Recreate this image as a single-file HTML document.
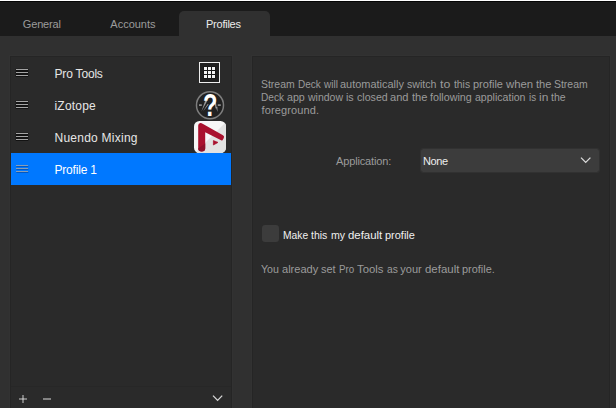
<!DOCTYPE html>
<html>
<head>
<meta charset="utf-8">
<title>Profiles</title>
<style>
html,body{margin:0;padding:0;}
body{width:616px;height:408px;overflow:hidden;background:#303030;position:relative;font-family:"Liberation Sans",sans-serif;font-size:12px;color:#e4e4e4;}
.abs{position:absolute;}
.t{position:absolute;white-space:nowrap;line-height:14px;transform-origin:0 0;}
#topbar{left:0;top:0;width:616px;height:36px;background:#1b1b1b;}
#topw{left:0;top:0;width:616px;height:1px;background:#fff;}
#topb{left:0;top:1px;width:616px;height:1px;background:#050505;}
#tab{left:179px;top:11px;width:91px;height:25px;background:#303030;border-radius:5px 5px 0 0;}
.tabt{top:18px;font-size:11px;line-height:13px;color:#9c9c9c;}
.panel{position:absolute;background:#2a2a2a;border:1px solid #252525;box-shadow:0 0 0 1px #323232;}
#lp{left:10px;top:56px;width:220px;height:360px;}
#rp{left:252px;top:56px;width:356px;height:360px;}
.row{position:absolute;left:11px;width:220px;height:32px;}
.name{left:54.5px;font-size:12px;color:#e6e6e6;}
.g{color:#9b9b9b;font-size:11px;line-height:13px;}
.wd{display:inline-block;transform-origin:0 0;}
.w{color:#f0f0f0;font-size:11px;line-height:13px;}
</style>
</head>
<body>
<div class="abs" id="topbar"></div>
<div class="abs" id="topw"></div>
<div class="abs" id="topb"></div>
<div class="abs" id="tab"></div>
<div class="t tabt" id="t1" style="left:22.8px;letter-spacing:-0.17px;">General</div>
<div class="t tabt" id="t2" style="left:110.3px;">Accounts</div>
<div class="t tabt" id="t3" style="left:206px;color:#ececec;letter-spacing:-0.24px;">Profiles</div>

<div class="panel" id="lp"></div>
<div class="panel" id="rp"></div>

<!-- selected row -->
<div class="row" style="top:153px;background:#0078ff;"></div>

<!-- hamburgers -->
<svg class="abs" style="left:14px;top:66px;" width="16" height="12" viewBox="0 0 16 12">
  <rect x="1.7" y="2.75" width="12.6" height="8.25" fill="#131313"/>
  <rect x="2" y="3" width="12" height="1" fill="#a4a4a4"/>
  <rect x="2" y="6" width="12" height="1" fill="#a4a4a4"/>
  <rect x="2" y="9" width="12" height="1" fill="#a4a4a4"/>
</svg>
<svg class="abs" style="left:14px;top:98px;" width="16" height="12" viewBox="0 0 16 12">
  <rect x="1.7" y="2.75" width="12.6" height="8.25" fill="#131313"/>
  <rect x="2" y="3" width="12" height="1" fill="#a4a4a4"/>
  <rect x="2" y="6" width="12" height="1" fill="#a4a4a4"/>
  <rect x="2" y="9" width="12" height="1" fill="#a4a4a4"/>
</svg>
<svg class="abs" style="left:14px;top:130px;" width="16" height="12" viewBox="0 0 16 12">
  <rect x="1.7" y="2.75" width="12.6" height="8.25" fill="#131313"/>
  <rect x="2" y="3" width="12" height="1" fill="#a4a4a4"/>
  <rect x="2" y="6" width="12" height="1" fill="#a4a4a4"/>
  <rect x="2" y="9" width="12" height="1" fill="#a4a4a4"/>
</svg>
<svg class="abs" style="left:14px;top:162px;" width="16" height="12" viewBox="0 0 16 12">
  <rect x="2.4" y="4" width="12" height="1" fill="#0058c4"/>
  <rect x="2.4" y="7" width="12" height="1" fill="#0058c4"/>
  <rect x="2.4" y="10" width="12" height="1" fill="#0058c4"/>
  <rect x="2" y="3" width="12" height="1" fill="#899db4"/>
  <rect x="2" y="6" width="12" height="1" fill="#899db4"/>
  <rect x="2" y="9" width="12" height="1" fill="#899db4"/>
</svg>

<div class="t name" id="n1" style="top:67px;letter-spacing:-0.18px;">Pro Tools</div>
<div class="t name" id="n2" style="top:99px;letter-spacing:0.2px;">iZotope</div>
<div class="t name" id="n3" style="top:131px;letter-spacing:0.25px;">Nuendo Mixing</div>
<div class="t name" id="n4" style="top:163px;color:#fff;letter-spacing:-0.2px;">Profile 1</div>

<!-- Pro Tools icon -->
<svg class="abs" style="left:197px;top:60px;" width="26" height="26" viewBox="0 0 26 26">
  <rect x="2.5" y="2.5" width="20" height="20" fill="#1f1f1f" stroke="#ededed" stroke-width="1"/>
  <rect x="6" y="6" width="13" height="13" fill="#181818"/>
  <g fill="#f4f4f4">
    <rect x="7" y="7" width="3" height="3"/><rect x="11" y="7" width="3" height="3"/><rect x="15" y="7" width="3" height="3"/>
    <rect x="7" y="11" width="3" height="3"/><rect x="11" y="11" width="3" height="3"/><rect x="15" y="11" width="3" height="3"/>
    <rect x="7" y="15" width="3" height="3"/><rect x="11" y="15" width="3" height="3"/><rect x="15" y="15" width="3" height="3"/>
  </g>
</svg>

<!-- iZotope icon -->
<svg class="abs" style="left:194px;top:89px;" width="32" height="32" viewBox="0 0 32 32">
  <circle cx="16" cy="16.2" r="13.5" fill="#212121" stroke="#7e7e7e" stroke-width="1.5"/>
  <g stroke="#8c8c8c" stroke-width="1.6" fill="none">
    <path d="M5 16.1H7.8M23.8 16.1H26.8"/>
  </g>
  <g fill="#9a9a9a">
    <path d="M11.4 11.2L13.2 12L7.4 22.6Z"/>
    <path d="M13.6 15L14.6 15.5L9 22.4Z"/>
    <path d="M20.6 13.6L21.9 13.2L22.6 18L23.4 17.8L23.6 23L22.2 19.2L21.6 19.4Z"/>
  </g>
  <text transform="translate(16.3,27) scale(0.74,1)" x="0" y="0" text-anchor="middle" font-family="Liberation Sans, sans-serif" font-weight="bold" font-size="32" fill="#ffffff">?</text>
</svg>

<!-- Nuendo icon -->
<svg class="abs" style="left:194px;top:121px;" width="32" height="32" viewBox="0 0 32 32">
  <defs>
    <clipPath id="nc"><rect x="0" y="0" width="32" height="32" rx="5.5" ry="5.5"/></clipPath>
  </defs>
  <g clip-path="url(#nc)">
    <rect x="0" y="0" width="32" height="32" fill="#f7f7f7"/>
    <polygon points="32,1 32,32 1,32" fill="#e2e2e2"/>
  </g>
  <path d="M4.2 4.6 Q4.2 1.8 7 2.1 L8.6 2.7 L29 14.3 Q30.7 15.5 29.8 17.1 L28.7 18.9 Q27.9 19.8 26.6 19.1 L11.2 11.3 L11.2 27.4 Q11.2 30.4 7.7 30.4 Q4.2 30.4 4.2 27.4 Z" fill="#a9112e"/>
  <path d="M4.2 27.6 L11.2 22.6 L11.2 27.4 Q11.2 30.4 7.7 30.4 Q4.2 30.4 4.2 27.4 Z" fill="#8e1029"/>
  <path d="M19.4 19.6 L24 21.4 L19.4 24 Z" fill="#a9112e" stroke="#a9112e" stroke-width="0.7" stroke-linejoin="round"/>
</svg>

<!-- bottom toolbar -->
<div class="abs" style="left:11px;top:386px;width:220px;height:1px;background:#272727;"></div>
<svg class="abs" style="left:16px;top:392px;" width="40" height="14" viewBox="0 0 40 14">
  <rect x="3" y="6" width="8" height="2" fill="#ffffff" fill-opacity="0.38"/>
  <rect x="6" y="3" width="2" height="8" fill="#ffffff" fill-opacity="0.38"/>
  <rect x="27" y="6" width="8" height="2" fill="#ffffff" fill-opacity="0.42"/>
</svg>
<svg class="abs" style="left:210px;top:392px;" width="16" height="12" viewBox="0 0 16 12">
  <path d="M3 3.6L7.6 8.4L12.2 3.6" fill="none" stroke="#d6d6d6" stroke-width="1.3"/>
</svg>

<!-- right panel content -->
<div class="t g" id="d1" style="left:261.2px;top:78px;"><span class="wd" style="width:33.64px;transform:scaleX(0.950);">Stream</span> <span class="wd" style="width:22.64px;transform:scaleX(0.906);">Deck</span> <span class="wd" style="width:13.84px;transform:scaleX(0.910);">will</span> <span class="wd" style="width:63.84px;transform:scaleX(0.995);">automatically</span> <span class="wd" style="width:29.44px;transform:scaleX(0.965);">switch</span> <span class="wd" style="width:10.64px;transform:scaleX(1.120);">to</span> <span class="wd" style="width:16.04px;transform:scaleX(0.940);">this</span> <span class="wd" style="width:29.94px;transform:scaleX(1.001);">profile</span> <span class="wd" style="width:27.14px;transform:scaleX(1.034);">when</span> <span class="wd" style="width:15.44px;transform:scaleX(1.013);">the</span> <span class="wd" style="width:33.70px;transform:scaleX(0.950);">Stream</span></div>
<div class="t g" id="d2" style="left:261.2px;top:91px;"><span class="wd" style="width:22.94px;transform:scaleX(0.918);">Deck</span> <span class="wd" style="width:17.74px;transform:scaleX(0.970);">app</span> <span class="wd" style="width:34.94px;transform:scaleX(0.954);">window</span> <span class="wd" style="width:7.64px;transform:scaleX(0.968);">is</span> <span class="wd" style="width:30.64px;transform:scaleX(0.966);">closed</span> <span class="wd" style="width:18.44px;transform:scaleX(1.008);">and</span> <span class="wd" style="width:15.44px;transform:scaleX(1.013);">the</span> <span class="wd" style="width:41.74px;transform:scaleX(0.976);">following</span> <span class="wd" style="width:50.44px;transform:scaleX(0.960);">application</span> <span class="wd" style="width:7.04px;transform:scaleX(0.893);">is</span> <span class="wd" style="width:9.24px;transform:scaleX(1.086);">in</span> <span class="wd" style="width:14.60px;transform:scaleX(0.954);">the</span></div>
<div class="t g" id="d3" style="left:261.5px;top:104px;letter-spacing:0.12px;">foreground.</div>

<div class="t g" id="al" style="left:336px;top:155px;letter-spacing:-0.14px;">Application:</div>
<div class="abs" style="left:420px;top:148px;width:178.4px;height:23.4px;background:#3c3c3c;background-clip:padding-box;border:1px solid rgba(60,60,60,0.4);border-radius:3.5px;"></div>
<div class="t" id="none" style="left:423px;top:155px;letter-spacing:-0.4px;font-size:11px;line-height:13px;color:#ededed;">None</div>
<svg class="abs" style="left:578px;top:154px;" width="16" height="12" viewBox="0 0 16 12">
  <path d="M3 3.6L7.7 8.4L12.4 3.6" fill="none" stroke="#dadada" stroke-width="1.3"/>
</svg>

<div class="abs" style="left:262.2px;top:225.2px;width:17.3px;height:17.2px;background:#3c3c3c;border-radius:3.2px;"></div>
<div class="t w" id="mk" style="left:283.3px;top:229px;"><span class="wd" style="width:25.14px;transform:scaleX(0.937);">Make</span> <span class="wd" style="width:16.24px;transform:scaleX(0.952);">this</span> <span class="wd" style="width:14.04px;transform:scaleX(0.961);">my</span> <span class="wd" style="width:34.24px;transform:scaleX(1.038);">default</span> <span class="wd" style="width:29.90px;transform:scaleX(0.998);">profile</span></div>
<div class="t g" id="ya" style="left:261.2px;top:263px;"><span class="wd" style="width:17.84px;transform:scaleX(0.964);">You</span> <span class="wd" style="width:36.24px;transform:scaleX(1.006);">already</span> <span class="wd" style="width:14.54px;transform:scaleX(0.994);">set</span> <span class="wd" style="width:15.14px;transform:scaleX(0.888);">Pro</span> <span class="wd" style="width:26.34px;transform:scaleX(1.028);">Tools</span> <span class="wd" style="width:10.74px;transform:scaleX(0.929);">as</span> <span class="wd" style="width:21.34px;transform:scaleX(1.000);">your</span> <span class="wd" style="width:34.34px;transform:scaleX(1.041);">default</span> <span class="wd" style="width:32.80px;transform:scaleX(0.993);">profile.</span></div>

</body>
</html>
